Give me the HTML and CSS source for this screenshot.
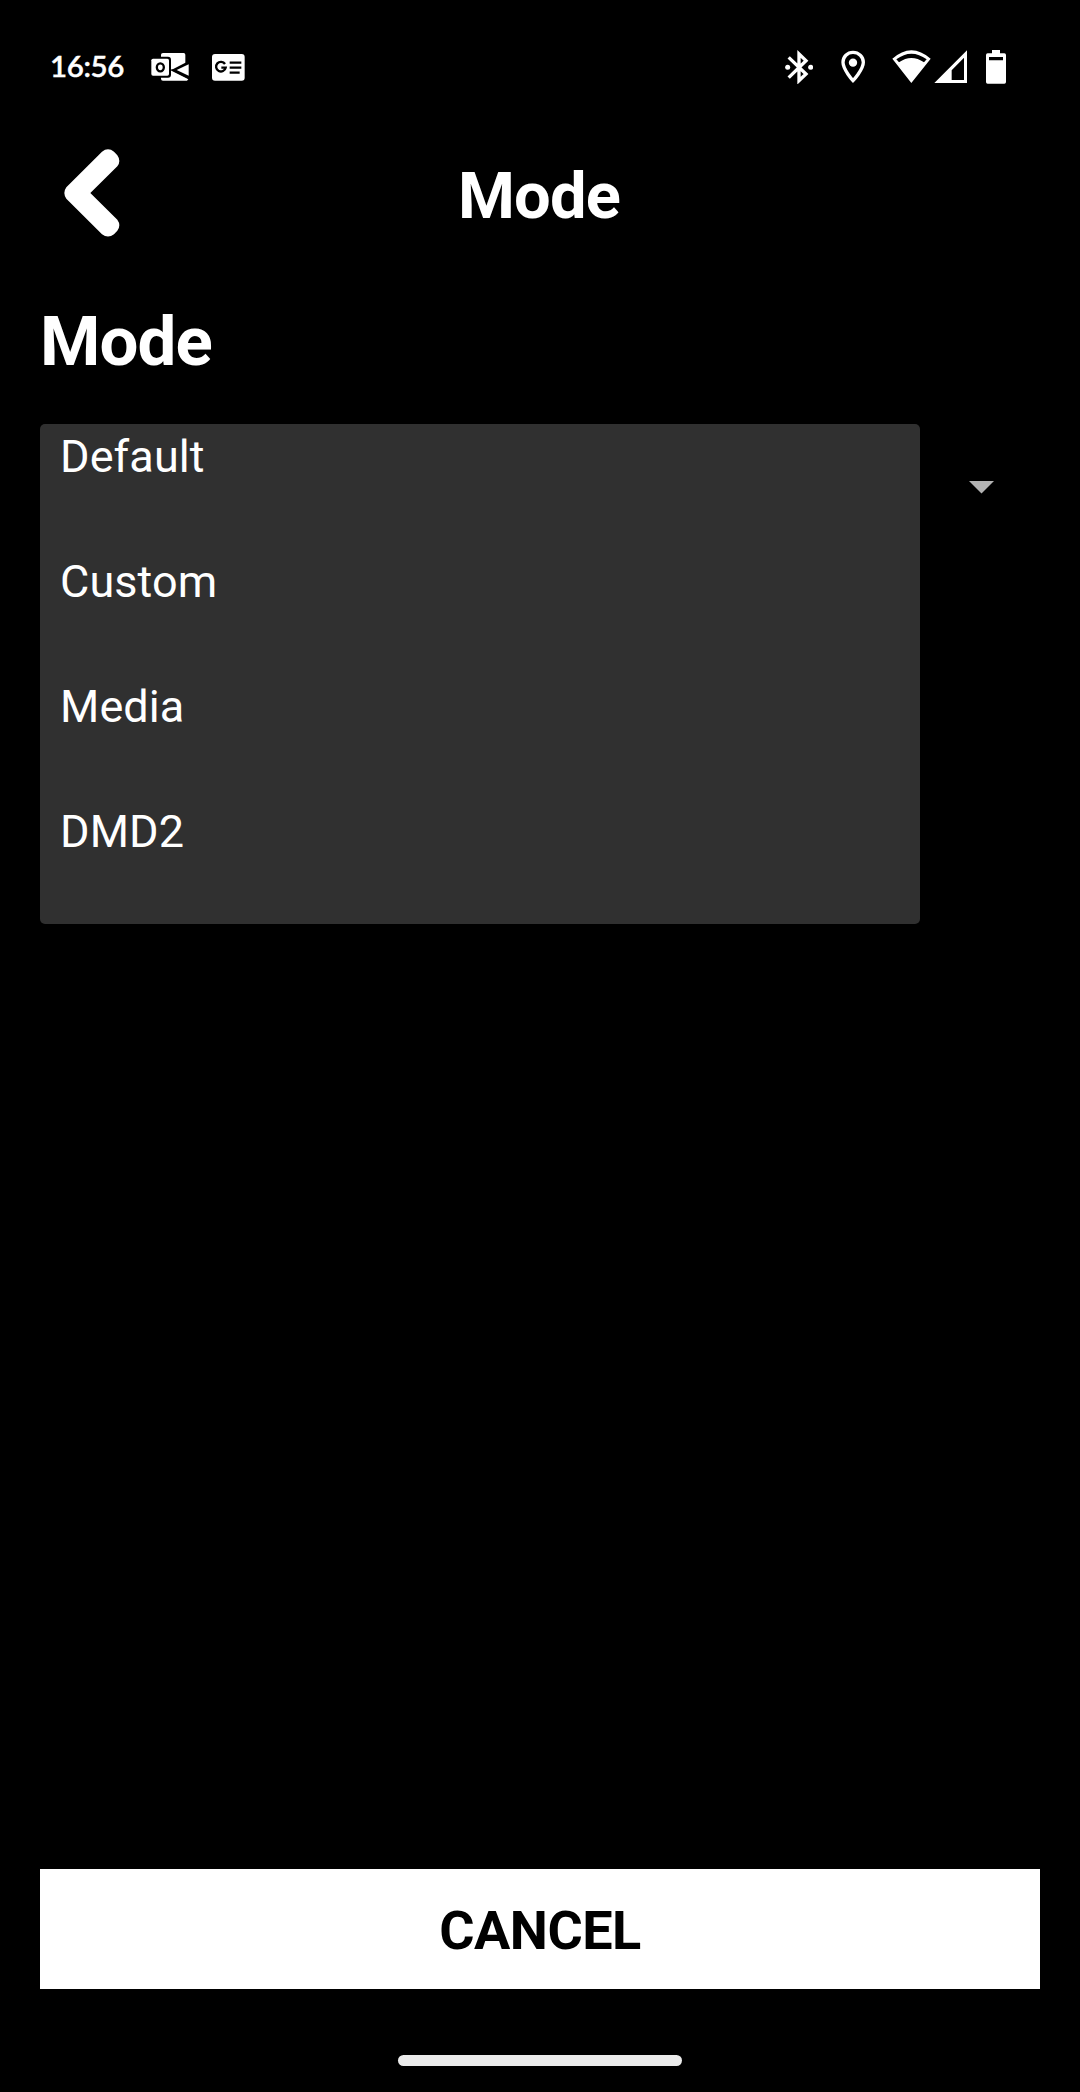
FILE: index.html
```html
<!DOCTYPE html>
<html lang="en">
<head>
<meta charset="utf-8">
<title>Mode</title>
<link rel="stylesheet" href="styles.css">
</head>
<body>
<div class="screen">
  <div class="status-bar">
    <span class="clock">16:56</span>
    <svg class="icon-mail" width="40" height="30" viewBox="360 66 120 90">
      <path fill="#fff" d="M399 69h62q5 0 5 5v38l10 34-5 6h-72q-6 0-6-6v-72q0-5 6-5z"/>
      <path fill="#000" d="M424 120l42-22h12v50z"/>
      <path fill="#fff" d="M476 103v34l-36-17z"/>
      <path fill="none" stroke="#000" stroke-width="5" d="M424 119l54 27"/>
      <rect x="358" y="80" width="65" height="63" rx="9" fill="#000"/>
      <rect x="364" y="86" width="53" height="51" rx="5" fill="#fff"/>
      <ellipse cx="391" cy="112" rx="10.500" ry="12" fill="none" stroke="#000" stroke-width="7"/>
    </svg>
    <svg class="icon-news" width="33" height="27" viewBox="545 72 99 81">
      <rect x="545" y="72" width="98" height="80" rx="9" fill="#fff"/>
      <path fill="none" stroke="#000" stroke-width="7" d="M584 102a14.500 14.500 0 1 0 2 11h-13M598 98h35M598 113h35M598 128h30"/>
    </svg>
    <svg class="icon-bluetooth" width="28" height="34" viewBox="46 60 84 102">
      <path fill="none" stroke="#fff" stroke-width="10" d="M57 82l52 50-21 20V72l21 20-52 51"/>
      <circle cx="54" cy="112" r="7.500" fill="#fff"/><circle cx="123" cy="112" r="7.500" fill="#fff"/>
    </svg>
    <svg class="icon-pin" width="24" height="34" viewBox="214 60 72 102">
      <path fill="none" stroke="#fff" stroke-width="10" d="M250 67c-17 0-30 13-30 30 0 22 30 55 30 55s31-33 31-55c0-17-14-30-31-30z"/>
      <circle cx="250" cy="98" r="12.500" fill="#fff"/>
    </svg>
    <svg class="icon-signal" width="76" height="34" viewBox="366 60 228 102">
      <path fill="#fff" fill-rule="evenodd" d="M367 86Q424 35 482 86L424 159zM379 88l8 9Q424 71 462 97l8-9Q424 54 379 88z"/>
      <path fill="#fff" fill-rule="evenodd" d="M591 61v98h-98zM582 83l-37 38v29h37z"/>
    </svg>
    <svg class="icon-battery" width="20" height="34" viewBox="648 60 60 102">
      <path fill="#fff" fill-rule="evenodd" d="M666 60h24v10h13q5 0 5 5v81q0 5-5 5h-50q-5 0-5-5V75q0-5 5-5h13zM657 81v10h42V81z"/>
    </svg>
  </div>
  <header class="header">
    <svg class="back" width="56" height="88" viewBox="102 56 168 264">
      <path fill="#fff" d="M216 64q18-14 36 0l10 11q12 17 0 33l-81 80 81 80q12 17 0 33l-10 11q-18 13-36 0L109 205q-12-17 0-34z"/>
    </svg>
    <h1 class="title">Mode</h1>
  </header>
  <main class="content">
    <h2 class="label">Mode</h2>
    <div class="select">
      <ul class="options">
        <li class="option">Default</li>
        <li class="option">Custom</li>
        <li class="option">Media</li>
        <li class="option">DMD2</li>
      </ul>
      <svg class="caret" width="25" height="13" viewBox="0 0 25 13"><path fill="#b3b3b3" d="M0 0h25L12.500 12.500z"/></svg>
    </div>
  </main>
  <button class="cancel">CANCEL</button>
  <div class="nav-handle"></div>
</div>
</body>
</html>
```
FILE: styles.css
```css
* { box-sizing: border-box; margin: 0; padding: 0; }
body { background: #000; color: #fff; font-family: Roboto, sans-serif; }
.screen { width: 1080px; height: 2092px; display: flex; flex-direction: column; }
.status-bar { height: 134px; padding: 50px 74px 0 50px; display: flex; align-items: flex-start; }
.status-bar svg { flex: none; }
.clock { width: 100px; font: 600 29.500px/32px Lato, sans-serif; letter-spacing: -0.4px; -webkit-text-stroke: 0.4px #fff; }
.icon-mail { margin-top: 2px; }
.icon-news { margin: 4px 0 0 21.7px; }
.icon-bluetooth { margin-left: auto; }
.icon-pin { margin-left: 28px; }
.icon-signal { margin-left: 26.700px; }
.icon-battery { margin-left: 18px; }
.header { height: 125px; padding: 0 64px; display: grid; grid-template-columns: 56px 1fr 56px; align-items: center; }
.back { margin-top: -7px; }
.title { margin: -2px 2px 0 0; font-size: 65px; line-height: 76px; letter-spacing: -0.8px; text-align: center; }
.content { flex: 1; padding: 0 40px; }
.label { height: 165px; padding-top: 42px; font-size: 69px; line-height: 81px; letter-spacing: -0.9px; }
.select { display: flex; }
.options { width: 880px; height: 500px; background: #303030; border-radius: 5px; list-style: none; }
.option { height: 125px; padding-left: 20px; font-size: 45px; line-height: 65px; letter-spacing: 0.1px; }
.caret { margin: 57px 0 0 48.500px; }
.cancel { height: 120px; margin: 0 40px 66px; padding-top: 3px; border: 0; background: #fff; color: #000; font: 700 54px/63px Roboto, sans-serif; letter-spacing: -0.5px; }
.nav-handle { width: 284px; height: 11px; margin: 0 auto 26px; border-radius: 6px; background: #ebebeb; }
```
